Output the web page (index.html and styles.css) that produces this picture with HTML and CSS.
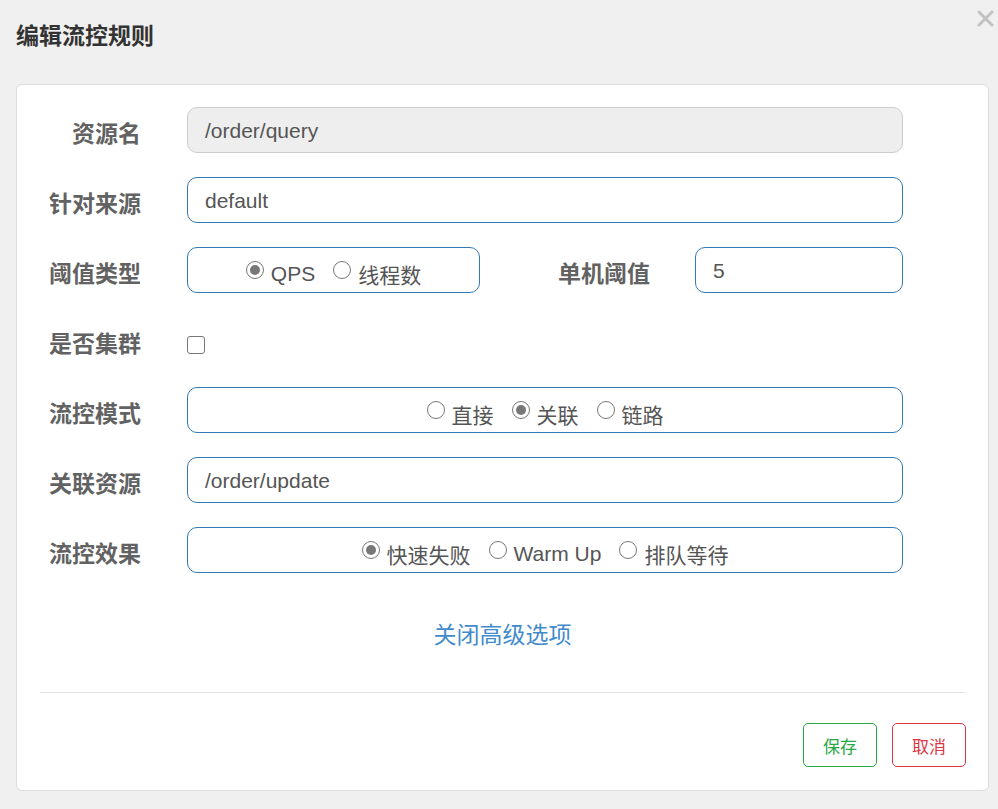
FILE: index.html
```html
<!DOCTYPE html>
<html lang="zh">
<head>
<meta charset="utf-8">
<title>编辑流控规则</title>
<link rel="stylesheet" href="styles.css">
</head>
<body>
<div class="header">
  <h4 class="title">编辑流控规则</h4>
  <span class="close"><svg width="17" height="17" viewBox="0 0 17 17"><path d="M2 2 L15 15 M15 2 L2 15" stroke="#c2c2c2" stroke-width="3" stroke-linecap="round"/></svg></span>
</div>
<div class="card">
  <form class="form">
    <div class="row">
      <label class="label">资源名</label>
      <div class="control input disabled">/order/query</div>
    </div>
    <div class="row">
      <label class="label">针对来源</label>
      <div class="control input">default</div>
    </div>
    <div class="row">
      <label class="label">阈值类型</label>
      <div class="radio-box small">
        <span class="radio checked"></span><span class="opt">QPS</span>
        <span class="radio"></span><span class="opt">线程数</span>
      </div>
      <label class="label mid">单机阈值</label>
      <div class="input short">5</div>
    </div>
    <div class="row">
      <label class="label">是否集群</label>
      <div class="check-wrap"><span class="checkbox"></span></div>
    </div>
    <div class="row">
      <label class="label">流控模式</label>
      <div class="control radio-box">
        <span class="radio"></span><span class="opt">直接</span>
        <span class="radio checked"></span><span class="opt">关联</span>
        <span class="radio"></span><span class="opt">链路</span>
      </div>
    </div>
    <div class="row">
      <label class="label">关联资源</label>
      <div class="control input">/order/update</div>
    </div>
    <div class="row">
      <label class="label">流控效果</label>
      <div class="control radio-box">
        <span class="radio checked"></span><span class="opt">快速失败</span>
        <span class="radio"></span><span class="opt">Warm Up</span>
        <span class="radio"></span><span class="opt">排队等待</span>
      </div>
    </div>
  </form>
  <div class="toggle"><a class="link">关闭高级选项</a></div>
  <hr class="divider">
  <div class="footer">
    <button class="btn save" type="button">保存</button>
    <button class="btn cancel" type="button">取消</button>
  </div>
</div>
</body>
</html>
```
FILE: styles.css
```css
* { box-sizing: border-box; }
html, body { margin: 0; padding: 0; }
body {
  background: #f0f0f0;
  font-family: "Liberation Sans", "Noto Sans CJK SC", sans-serif;
  color: #555;
  width: 998px;
  height: 809px;
  overflow: hidden;
}
.header {
  display: flex;
  justify-content: space-between;
  align-items: flex-start;
  height: 84px;
  padding: 0 4px 0 16px;
}
.title {
  margin: 21px 0 0 0;
  font-size: 23px;
  line-height: 30px;
  font-weight: bold;
  color: #333;
}
.close {
  margin-top: 10px;
  display: flex;
}
.card {
  margin: 0 9px 0 16px;
  height: 707px;
  background: #fff;
  border: 1px solid #dcdcdc;
  border-radius: 6px;
}
.form {
  padding-top: 22px;
  display: flex;
  flex-direction: column;
  gap: 24px;
}
.row {
  display: flex;
  align-items: center;
  height: 46px;
}
.label {
  width: 124px;
  margin-right: 46px;
  text-align: right;
  font-size: 23px;
  font-weight: bold;
  color: #626262;
  padding-top: 4px;
}
.label.mid {
  width: 170px;
  margin-right: 45px;
}
.control { width: 716px; }
.input {
  height: 46px;
  border: 1px solid #337ab7;
  border-radius: 10px;
  padding: 0 17px;
  display: flex;
  align-items: center;
  font-size: 21px;
  color: #555;
  padding-top: 1px;
}
.input.disabled {
  background: #eee;
  border-color: #ccc;
}
.input.short { width: 208px; }
.radio-box {
  height: 46px;
  border: 1px solid #337ab7;
  border-radius: 10px;
  display: flex;
  align-items: center;
  justify-content: center;
  font-size: 21px;
  color: #555;
  padding-top: 7px;
}
.radio-box.small { width: 293px; }
.radio {
  width: 18px;
  height: 18px;
  border: 1.5px solid #777;
  border-radius: 50%;
  display: inline-flex;
  align-items: center;
  justify-content: center;
  margin-right: 7px;
  margin-top: -7px;
  background: #fff;
}
.radio.checked::after {
  content: "";
  width: 10px;
  height: 10px;
  border-radius: 50%;
  background: #777;
}
.opt { margin-right: 18px; }
.opt:last-child { margin-right: 0; }
.check-wrap {
  display: flex;
  align-items: center;
  padding-top: 10px;
}
.checkbox {
  width: 18px;
  height: 18px;
  border: 1.5px solid #777;
  border-radius: 3px;
  background: #fff;
}
.toggle {
  text-align: center;
  margin-top: 45px;
  height: 34px;
}
.link {
  font-size: 23px;
  line-height: 34px;
  color: #428bca;
}
.divider {
  margin: 40px 23px 0 23px;
  border: 0;
  border-top: 1px solid #e3e3e3;
  height: 0;
}
.footer {
  display: flex;
  justify-content: flex-end;
  gap: 15px;
  padding: 30px 22px 0 0;
}
.btn {
  width: 74px;
  height: 44px;
  background: #fff;
  border-radius: 5px;
  font-family: "Liberation Sans", "Noto Sans CJK SC", sans-serif;
  font-size: 17px;
  padding: 0;
}
.btn.save { border: 1px solid #28a745; color: #28a745; }
.btn.cancel { border: 1px solid #dc3545; color: #dc3545; }
```
